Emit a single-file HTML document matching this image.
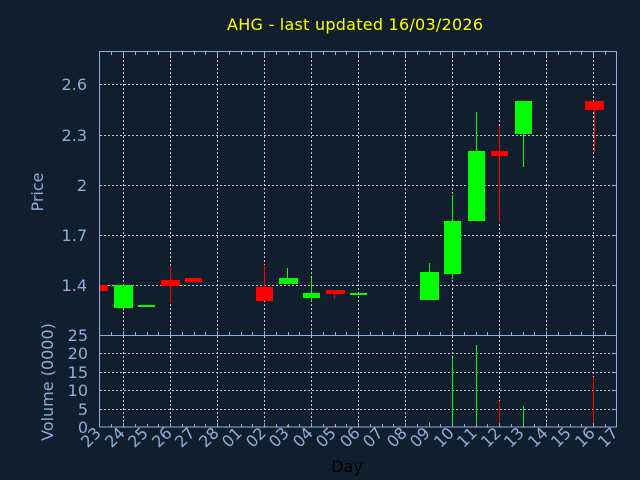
<!DOCTYPE html>
<html><head><meta charset="utf-8"><style>
html,body{margin:0;padding:0;background:#111e2e;}
svg{display:block;font-family:"DejaVu Sans","Liberation Sans",sans-serif;}
</style></head><body>
<svg width="640" height="480" viewBox="0 0 640 480" xmlns="http://www.w3.org/2000/svg">
<rect width="640" height="480" fill="#111e2e"/>
<text x="227" y="30" fill="#ffff00" font-size="16" textLength="256">AHG - last updated 16/03/2026</text>
<!-- grid -->
<g stroke="#c8c8c8" stroke-width="1" stroke-dasharray="2,2">
<line x1="100" y1="84.5" x2="617" y2="84.5"/>
<line x1="100" y1="135.5" x2="617" y2="135.5"/>
<line x1="100" y1="185.5" x2="617" y2="185.5"/>
<line x1="100" y1="235.5" x2="617" y2="235.5"/>
<line x1="100" y1="285.5" x2="617" y2="285.5"/>
<line x1="100" y1="353.5" x2="617" y2="353.5"/>
<line x1="100" y1="372.5" x2="617" y2="372.5"/>
<line x1="100" y1="390.5" x2="617" y2="390.5"/>
<line x1="100" y1="409.5" x2="617" y2="409.5"/>
<g id="vg">
<line x1="123.5" y1="52" x2="123.5" y2="427"/>
<line x1="170.5" y1="52" x2="170.5" y2="427"/>
<line x1="217.5" y1="52" x2="217.5" y2="427"/>
<line x1="264.5" y1="52" x2="264.5" y2="427"/>
<line x1="311.5" y1="52" x2="311.5" y2="427"/>
<line x1="358.5" y1="52" x2="358.5" y2="427"/>
<line x1="405.5" y1="52" x2="405.5" y2="427"/>
<line x1="452.5" y1="52" x2="452.5" y2="427"/>
<line x1="499.5" y1="52" x2="499.5" y2="427"/>
<line x1="546.5" y1="52" x2="546.5" y2="427"/>
<line x1="593.5" y1="52" x2="593.5" y2="427"/>
</g>
</g>
<!-- candles -->
<g fill="#ff0000" stroke="#ff0000">
<line x1="170.5" y1="267" x2="170.5" y2="303"/>
<line x1="264.5" y1="265" x2="264.5" y2="301"/>
<line x1="334.5" y1="290" x2="334.5" y2="299"/>
<line x1="499.5" y1="126" x2="499.5" y2="222"/>
<line x1="594.5" y1="106" x2="594.5" y2="152"/>
</g>
<g stroke="#00ff00">
<line x1="123.5" y1="300" x2="123.5" y2="311"/>
<line x1="287.5" y1="268" x2="287.5" y2="280"/>
<line x1="311.5" y1="278" x2="311.5" y2="301"/>
<line x1="429.5" y1="263" x2="429.5" y2="275"/>
<line x1="452.5" y1="195" x2="452.5" y2="279"/>
<line x1="476.5" y1="112" x2="476.5" y2="155"/>
<line x1="523.5" y1="130" x2="523.5" y2="167"/>
</g>
<g fill="#ff0000">
<rect x="100" y="285" width="8" height="6"/>
<rect x="161" y="280" width="19" height="6"/>
<rect x="185" y="278" width="17" height="4"/>
<rect x="256" y="287" width="17" height="14"/>
<rect x="326" y="290" width="19" height="4"/>
<rect x="491" y="151" width="17" height="5"/>
<rect x="585" y="101" width="19" height="9"/>
</g>
<g fill="#00ff00">
<rect x="114" y="285" width="19" height="23"/>
<rect x="138" y="305" width="17" height="2"/>
<rect x="279" y="278" width="19" height="6"/>
<rect x="303" y="293" width="17" height="5"/>
<rect x="350" y="293" width="17" height="2"/>
<rect x="420" y="272" width="19" height="28"/>
<rect x="444" y="221" width="17" height="53"/>
<rect x="468" y="151" width="17" height="70"/>
<rect x="515" y="101" width="17" height="33"/>
</g>
<!-- volume -->
<g stroke="#00ff00">
<line x1="452.5" y1="358" x2="452.5" y2="427"/>
<line x1="476.5" y1="345" x2="476.5" y2="427"/>
<line x1="523.5" y1="406" x2="523.5" y2="427"/>
<line x1="429.5" y1="422" x2="429.5" y2="427"/>
<line x1="123.5" y1="425" x2="123.5" y2="427"/>
<line x1="287.5" y1="425" x2="287.5" y2="427"/>
<line x1="311.5" y1="425" x2="311.5" y2="427"/>
</g>
<g stroke="#ff0000">
<line x1="499.5" y1="401" x2="499.5" y2="427"/>
<line x1="593.5" y1="377" x2="593.5" y2="427"/>
<line x1="170.5" y1="423" x2="170.5" y2="427"/>
<line x1="264.5" y1="423" x2="264.5" y2="427"/>
<line x1="334.5" y1="425" x2="334.5" y2="427"/>
</g>
<!-- frame -->
<g stroke="#8eaedb" fill="none" stroke-width="1">
<rect x="99.5" y="51.5" width="517" height="375.5"/>
<line x1="99.5" y1="335.5" x2="617" y2="335.5"/>
<line x1="89" y1="84.5" x2="99" y2="84.5" stroke-width="0"/>
</g>
<g stroke="#8eaedb" stroke-width="1" id="ticks">
<path d="M111.5 52v3M123.5 52v4M135.5 52v3M147.5 52v3M158.5 52v3M170.5 52v4M182.5 52v3M194.5 52v3M205.5 52v3M217.5 52v4M229.5 52v3M241.5 52v3M252.5 52v3M264.5 52v4M276.5 52v3M288.5 52v3M299.5 52v3M311.5 52v4M323.5 52v3M335.5 52v3M346.5 52v3M358.5 52v4M370.5 52v3M382.5 52v3M393.5 52v3M405.5 52v4M417.5 52v3M429.5 52v3M440.5 52v3M452.5 52v4M464.5 52v3M476.5 52v3M487.5 52v3M499.5 52v4M511.5 52v3M523.5 52v3M534.5 52v3M546.5 52v4M558.5 52v3M570.5 52v3M581.5 52v3M593.5 52v4M605.5 52v3"/>
<path d="M111.5 335v-3M123.5 335v-4M135.5 335v-3M147.5 335v-3M158.5 335v-3M170.5 335v-4M182.5 335v-3M194.5 335v-3M205.5 335v-3M217.5 335v-4M229.5 335v-3M241.5 335v-3M252.5 335v-3M264.5 335v-4M276.5 335v-3M288.5 335v-3M299.5 335v-3M311.5 335v-4M323.5 335v-3M335.5 335v-3M346.5 335v-3M358.5 335v-4M370.5 335v-3M382.5 335v-3M393.5 335v-3M405.5 335v-4M417.5 335v-3M429.5 335v-3M440.5 335v-3M452.5 335v-4M464.5 335v-3M476.5 335v-3M487.5 335v-3M499.5 335v-4M511.5 335v-3M523.5 335v-3M534.5 335v-3M546.5 335v-4M558.5 335v-3M570.5 335v-3M581.5 335v-3M593.5 335v-4M605.5 335v-3"/>
<path d="M111.5 427v-3M123.5 427v-4M135.5 427v-3M147.5 427v-3M158.5 427v-3M170.5 427v-4M182.5 427v-3M194.5 427v-3M205.5 427v-3M217.5 427v-4M229.5 427v-3M241.5 427v-3M252.5 427v-3M264.5 427v-4M276.5 427v-3M288.5 427v-3M299.5 427v-3M311.5 427v-4M323.5 427v-3M335.5 427v-3M346.5 427v-3M358.5 427v-4M370.5 427v-3M382.5 427v-3M393.5 427v-3M405.5 427v-4M417.5 427v-3M429.5 427v-3M440.5 427v-3M452.5 427v-4M464.5 427v-3M476.5 427v-3M487.5 427v-3M499.5 427v-4M511.5 427v-3M523.5 427v-3M534.5 427v-3M546.5 427v-4M558.5 427v-3M570.5 427v-3M581.5 427v-3M593.5 427v-4M605.5 427v-3"/>
<path d="M617 84.5h-4M617 135.5h-4M617 185.5h-4M617 235.5h-4M617 285.5h-4M617 353.5h-4M617 372.5h-4M617 390.5h-4M617 409.5h-4"/>
</g>
<!-- y labels -->
<g fill="#8eaedb" font-size="16" text-anchor="end">
<text x="87" y="90">2.6</text>
<text x="87" y="141">2.3</text>
<text x="87" y="191">2</text>
<text x="87" y="241">1.7</text>
<text x="87" y="291">1.4</text>
<text x="88" y="341">25</text>
<text x="88" y="359">20</text>
<text x="88" y="378">15</text>
<text x="88" y="396">10</text>
<text x="88" y="415">5</text>
<text x="88" y="433">0</text>
</g>
<text transform="translate(43,192) rotate(-90)" fill="#8eaedb" font-size="16" text-anchor="middle">Price</text>
<text transform="translate(53,382) rotate(-90)" fill="#8eaedb" font-size="16" text-anchor="middle">Volume (0000)</text>
<text x="347" y="472" fill="#000000" font-size="16" text-anchor="middle">Day</text>
<!-- x labels -->
<g fill="#8eaedb" font-size="16" text-anchor="end">
<text transform="translate(102,434) rotate(-45)">23</text>
<text transform="translate(126,434) rotate(-45)">24</text>
<text transform="translate(149,434) rotate(-45)">25</text>
<text transform="translate(173,434) rotate(-45)">26</text>
<text transform="translate(196,434) rotate(-45)">27</text>
<text transform="translate(220,434) rotate(-45)">28</text>
<text transform="translate(243,434) rotate(-45)">01</text>
<text transform="translate(267,434) rotate(-45)">02</text>
<text transform="translate(290,434) rotate(-45)">03</text>
<text transform="translate(314,434) rotate(-45)">04</text>
<text transform="translate(337,434) rotate(-45)">05</text>
<text transform="translate(361,434) rotate(-45)">06</text>
<text transform="translate(384,434) rotate(-45)">07</text>
<text transform="translate(408,434) rotate(-45)">08</text>
<text transform="translate(431,434) rotate(-45)">09</text>
<text transform="translate(455,434) rotate(-45)">10</text>
<text transform="translate(478,434) rotate(-45)">11</text>
<text transform="translate(502,434) rotate(-45)">12</text>
<text transform="translate(525,434) rotate(-45)">13</text>
<text transform="translate(549,434) rotate(-45)">14</text>
<text transform="translate(572,434) rotate(-45)">15</text>
<text transform="translate(596,434) rotate(-45)">16</text>
<text transform="translate(619,434) rotate(-45)">17</text>
</g>
</svg>
</body></html>
